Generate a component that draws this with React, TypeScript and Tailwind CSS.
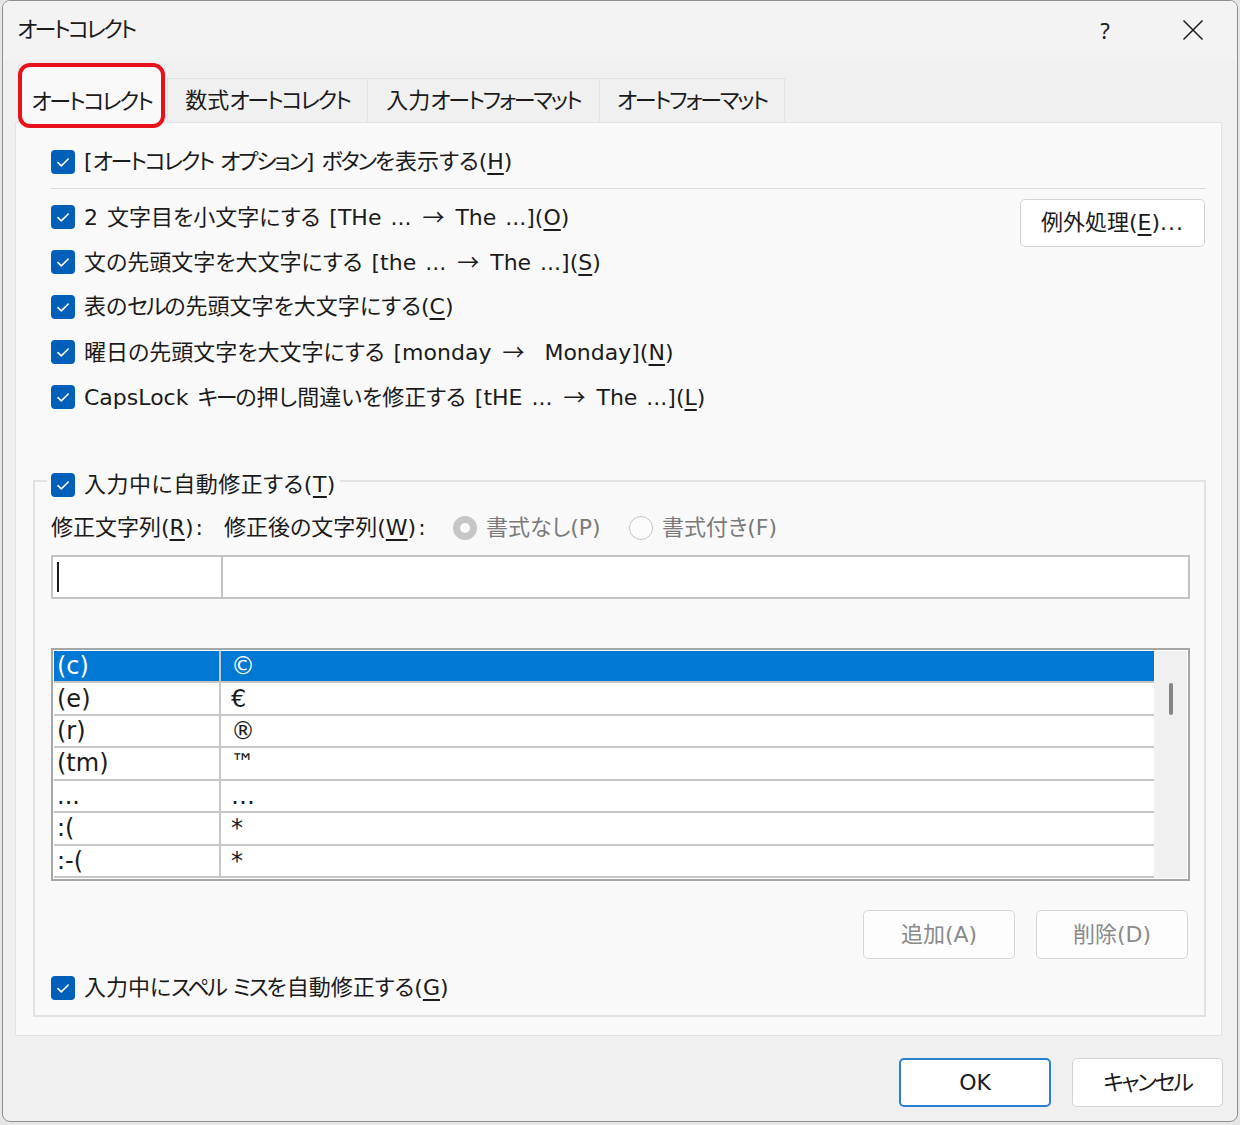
import React from "react";

function Check() {
  return (
    <span className="flex h-[24px] w-[24px] shrink-0 items-center justify-center rounded-[4px] bg-[#005fb8]">
      <svg width="24" height="24" viewBox="0 0 24 24">
        <path d="M7 12.6l3.3 3.3L17.2 9" fill="none" stroke="white" strokeWidth="1.6" strokeLinecap="round" strokeLinejoin="round" />
      </svg>
    </span>
  );
}

function U({ c }: { c: string }) {
  return <span className="underline decoration-[1.5px] underline-offset-[4px]">{c}</span>;
}

function K({ children }: { children: React.ReactNode }) {
  return <span className="tracking-[-2.2px]">{children}</span>;
}

function Arrow() {
  return <span className="mx-[2px] font-['Noto_Sans_CJK_JP',sans-serif] [font-feature-settings:normal]">→</span>;
}

function CheckRow({ children, h = "h-[45px]", ws = "" }: { children: React.ReactNode; h?: string; ws?: string }) {
  return (
    <div className={`flex ${h} items-center gap-[9px]`}>
      <Check />
      <span className={`whitespace-pre leading-none ${ws}`}>{children}</span>
    </div>
  );
}

const rows: [string, string][] = [
  ["(c)", "©"],
  ["(e)", "€"],
  ["(r)", "®"],
  ["(tm)", "™"],
  ["...", "…"],
  [":(", "*"],
  [":-(", "*"],
];

export default function App() {
  return (
    <div className="h-[1125px] w-[1240px] bg-[#e6e6e6] pl-[2px] font-['DejaVu_Sans','Noto_Sans_CJK_JP',sans-serif] text-[22px] text-[#1b1b1b] [font-feature-settings:'palt']">
      <div className="flex h-[1122px] w-[1236px] flex-col overflow-hidden rounded-[8px] border border-[#8f8f8f] bg-[#f0f0f0]">
        {/* title bar */}
        <div className="flex h-[58px] shrink-0 items-center bg-[#f3f3f3] pl-[14px]">
          <span className="flex-1 leading-none tracking-[-2.6px]">オートコレクト</span>
          <div className="flex h-full w-[88px] items-center justify-center font-['Noto_Sans',sans-serif] leading-none">?</div>
          <div className="flex h-full w-[88px] items-center justify-center">
            <svg width="22" height="22" viewBox="0 0 22 22">
              <path d="M1.5 1.5L20.5 20.5M20.5 1.5L1.5 20.5" stroke="#1b1b1b" strokeWidth="1.5" />
            </svg>
          </div>
        </div>

        {/* tabs */}
        <div className="flex h-[63px] shrink-0 items-end pl-[15px]">
          <div className="relative z-10 -mb-px flex h-[58px] w-[147px] items-center justify-center border border-b-0 border-[#e3e3e3] bg-[#f9f9f9] pt-[14px] leading-none">
            <K>オートコレクト</K>
            <div className="absolute -bottom-[5px] -left-[1px] -right-[1px] -top-[3px] rounded-[12px] border-[4px] border-[#e8101a]" />
          </div>
          <div className="ml-[2px] flex h-[44px] w-[201px] items-center justify-center border border-b-0 border-[#e3e3e3] leading-none">
            数式<K>オートコレクト</K>
          </div>
          <div className="flex h-[44px] w-[232px] items-center justify-center border border-b-0 border-l-0 border-[#e3e3e3] leading-none">
            入力<K>オートフォーマット</K>
          </div>
          <div className="flex h-[44px] w-[185px] items-center justify-center border border-b-0 border-l-0 border-[#e3e3e3] leading-none">
            <K>オートフォーマット</K>
          </div>
        </div>

        {/* panel */}
        <div className="ml-[12px] flex w-[1207px] flex-col border border-[#e3e3e3] bg-[#f9f9f9] pb-[18px] pl-[17px] pr-[15px] pt-[16px]">
          <div className="pl-[18px]">
            <CheckRow>
              [<K>オートコレクト</K> <K>オプション</K>] <K>ボタン</K>を表示する(<U c="H" />)
            </CheckRow>
            <div className="mt-[4px] h-px bg-[#dcdcdc]" />
            <div className="mt-[5px] flex justify-between">
              <div className="flex flex-col">
                <CheckRow ws="[word-spacing:2px]">
                  2 文字目を小文字にする [THe ... <Arrow /> The ...](<U c="O" />)
                </CheckRow>
                <CheckRow ws="[word-spacing:2px]">
                  文の先頭文字を大文字にする [the ... <Arrow /> The ...](<U c="S" />)
                </CheckRow>
                <CheckRow>
                  表の<K>セル</K>の先頭文字を大文字にする(<U c="C" />)
                </CheckRow>
                <CheckRow ws="[word-spacing:2px]">
                  曜日の先頭文字を大文字にする [monday <Arrow />  Monday](<U c="N" />)
                </CheckRow>
                <CheckRow ws="[word-spacing:2px]">
                  CapsLock <K>キー</K>の押し間違いを修正する [tHE ... <Arrow /> The ...](<U c="L" />)
                </CheckRow>
              </div>
              <button className="mr-[1px] mt-[5px] flex h-[48px] w-[185px] items-center justify-center rounded-[5px] border border-[#d3d3d3] bg-white leading-none">
                例外処理(<U c="E" />)<span className="tracking-[1px]">...</span>
              </button>
            </div>
          </div>

          <fieldset className="mt-[45px] border-2 border-[#e2e2e2] pb-[9px] pl-[16px] pr-[14px]">
            <legend className="ml-[-4px] flex h-[34px] items-center gap-[9px] px-[4px] pt-[8px]">
              <Check />
              <span className="leading-none tracking-[0.5px]">
                入力中に自動修正する(<U c="T" />)
              </span>
            </legend>

            <div className="mt-[12px] flex h-[36px] items-center leading-none">
              <span className="w-[173px]">
                修正文字列(<U c="R" />)<span className="ml-[2px]">:</span>
              </span>
              <span className="w-[229px]">
                修正後の文字列(<U c="W" />)<span className="ml-[2px]">:</span>
              </span>
              <span className="flex h-[24px] w-[24px] items-center justify-center rounded-full bg-[#c6c6c6]">
                <span className="h-[10px] w-[10px] rounded-full bg-white" />
              </span>
              <span className="ml-[9px] w-[143px] text-[#7a7a7a]">書式なし(P)</span>
              <span className="h-[24px] w-[24px] rounded-full border-[1.5px] border-[#c6c6c6] bg-[#fcfcfc]" />
              <span className="ml-[9px] text-[#7a7a7a]">書式付き(F)</span>
            </div>

            <div className="mt-[9px] flex h-[44px]">
              <div className="flex w-[172px] items-center border-2 border-[#c3c3c3] bg-white pl-[4px]">
                <span className="h-[30px] w-[2px] bg-[#1b1b1b]" />
              </div>
              <div className="flex-1 border-2 border-l-0 border-[#c3c3c3] bg-white" />
            </div>

            <div className="mt-[49px] flex h-[233px] border-2 border-[#a6a6a6] bg-white p-px font-['DejaVu_Sans',sans-serif] text-[24px]">
              <div className="flex flex-1 flex-col">
                {rows.map(([a, b], i) => (
                  <div
                    key={i}
                    className={`flex h-[32.5px] border-b-2 border-[#c6c6c6] ${i === 0 ? "bg-[#0078d4] text-white" : "text-[#1b1b1b]"}`}
                  >
                    <div className="flex w-[167px] items-center border-r-2 border-[#c6c6c6] pl-[3px] leading-none">{a}</div>
                    <div className="flex flex-1 items-center pl-[10px] leading-none">{b}</div>
                  </div>
                ))}
              </div>
              <div className="flex w-[33px] justify-center bg-[#f0f0f0]">
                <span className="mt-[32px] h-[32px] w-[4px] rounded-full bg-[#858585]" />
              </div>
            </div>

            <div className="mt-[29px] flex justify-end gap-[21px] pr-[2px]">
              <button className="flex h-[49px] w-[152px] items-center justify-center rounded-[5px] border border-[#d6d6d6] bg-[#fdfdfd] leading-none text-[#8a8a8a]">
                追加(A)
              </button>
              <button className="flex h-[49px] w-[152px] items-center justify-center rounded-[5px] border border-[#d6d6d6] bg-[#fdfdfd] leading-none text-[#8a8a8a]">
                削除(D)
              </button>
            </div>

            <div className="mt-[11px]">
              <CheckRow h="h-[36px]">
                入力中に<K>スペル</K> <K>ミス</K>を自動修正する(<U c="G" />)
              </CheckRow>
            </div>
          </fieldset>
        </div>

        {/* dialog buttons */}
        <div className="mt-[22px] flex justify-end gap-[21px] pr-[14px]">
          <button className="flex h-[49px] w-[152px] items-center justify-center rounded-[5px] border-2 border-[#2a7fd1] bg-white leading-none">
            OK
          </button>
          <button className="flex h-[49px] w-[151px] items-center justify-center rounded-[5px] border border-[#d3d3d3] bg-white leading-none">
            <K>キャンセル</K>
          </button>
        </div>
      </div>
    </div>
  );
}
